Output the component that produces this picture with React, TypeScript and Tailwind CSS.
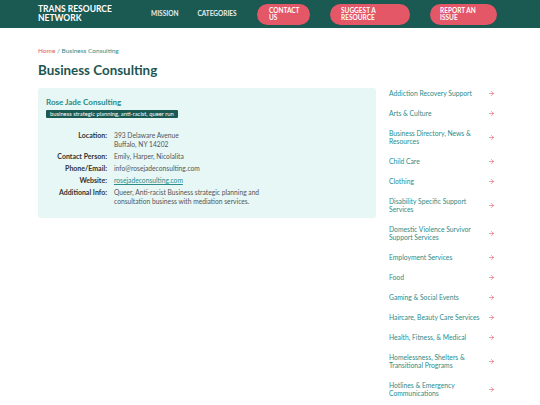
import { ArrowRight } from "lucide-react";

const categories = [
  "Addiction Recovery Support",
  "Arts & Culture",
  "Business Directory, News & Resources",
  "Child Care",
  "Clothing",
  "Disability Specific Support Services",
  "Domestic Violence Survivor Support Services",
  "Employment Services",
  "Food",
  "Gaming & Social Events",
  "Haircare, Beauty Care Services",
  "Health, Fitness, & Medical",
  "Homelessness, Shelters & Transitional Programs",
  "Hotlines & Emergency Communications",
];

function Row({ label, children }: { label: string; children: React.ReactNode }) {
  return (
    <div className="flex gap-[7px]">
      <div className="w-[61px] shrink-0 text-right text-[7px] font-bold text-[#333]">{label}</div>
      <div className="text-[#555]">{children}</div>
    </div>
  );
}

export default function App() {
  return (
    <div className="min-h-[405px] bg-white" style={{ fontFamily: "Lato, 'Open Sans', sans-serif" }}>
      <header className="h-[28px] bg-[#1b5953]">
        <div className="mx-auto flex h-full w-[464px] items-center pr-[5px]">
          <div className="w-[113px] text-[8.5px] font-bold uppercase leading-[9px] text-white">
            Trans Resource Network
          </div>
          <nav className="flex items-center gap-[19px] text-[6.5px] font-bold uppercase text-white/90">
            <span>Mission</span>
            <span>Categories</span>
          </nav>
          <div className="ml-auto flex items-center gap-[20px]">
            <a className="flex h-[21px] w-[53px] items-center rounded-full bg-[#e35767] px-[12px] text-[6.5px] font-bold uppercase leading-[7px] text-white">
              Contact Us
            </a>
            <a className="flex h-[21px] w-[80px] items-center rounded-full bg-[#e35767] px-[11px] text-[6.5px] font-bold uppercase leading-[7px] text-white">
              Suggest a Resource
            </a>
            <a className="flex h-[21px] w-[67px] items-center rounded-full bg-[#e35767] px-[10px] text-[6.5px] font-bold uppercase leading-[7px] text-white">
              Report an Issue
            </a>
          </div>
        </div>
      </header>

      <main className="mx-auto w-[464px] pt-[19px]">
        <div className="text-[6.5px] leading-[8px]">
          <span className="text-[#e35767]">Home</span>
          <span className="text-[#2b8c8a]"> / Business Consulting</span>
        </div>
        <h1 className="mt-[6px] text-[13.4px] font-bold leading-[18px] text-[#1d5651]">Business Consulting</h1>

        <div className="mt-[9px] flex gap-[2px]">
          <div className="w-[338px] shrink-0">
            <div className="rounded-[3px] bg-[#e6f7f5] px-[8px] pb-[12px] pt-[9px] text-[6.7px] leading-[9px]">
              <div className="text-[8px] font-bold leading-[11px] text-[#2b8c8a]">Rose Jade Consulting</div>
              <span className="mt-[2px] inline-block rounded-[1px] bg-[#1b5953] px-[4px] text-[5.8px] leading-[8px] text-white">
                business strategic planning, anti-racist, queer run
              </span>
              <div className="mt-[13px] flex flex-col gap-[3px]">
                <Row label="Location:">
                  393 Delaware Avenue
                  <br />
                  Buffalo, NY 14202
                </Row>
                <Row label="Contact Person:">Emily, Harper, Nicolalita</Row>
                <Row label="Phone/Email:">info@rosejadeconsulting.com</Row>
                <Row label="Website:">
                  <span className="text-[#2b8c8a] underline">rosejadeconsulting.com</span>
                </Row>
                <Row label="Additional Info:">
                  Queer, Anti-racist Business strategic planning and
                  <br />
                  consultation business with mediation services.
                </Row>
              </div>
            </div>
          </div>

          <aside className="-mt-[5px] flex-1">
            {categories.map((c) => (
              <div key={c} className="flex items-center py-[6px] pl-[11px] pr-[7px]">
                <span className="w-[97px] text-[6.75px] leading-[8px] text-[#2b8c8a]">{c}</span>
                <ArrowRight className="ml-auto h-[7px] w-[7px] text-[#e35767]" strokeWidth={2} />
              </div>
            ))}
          </aside>
        </div>
      </main>
    </div>
  );
}
